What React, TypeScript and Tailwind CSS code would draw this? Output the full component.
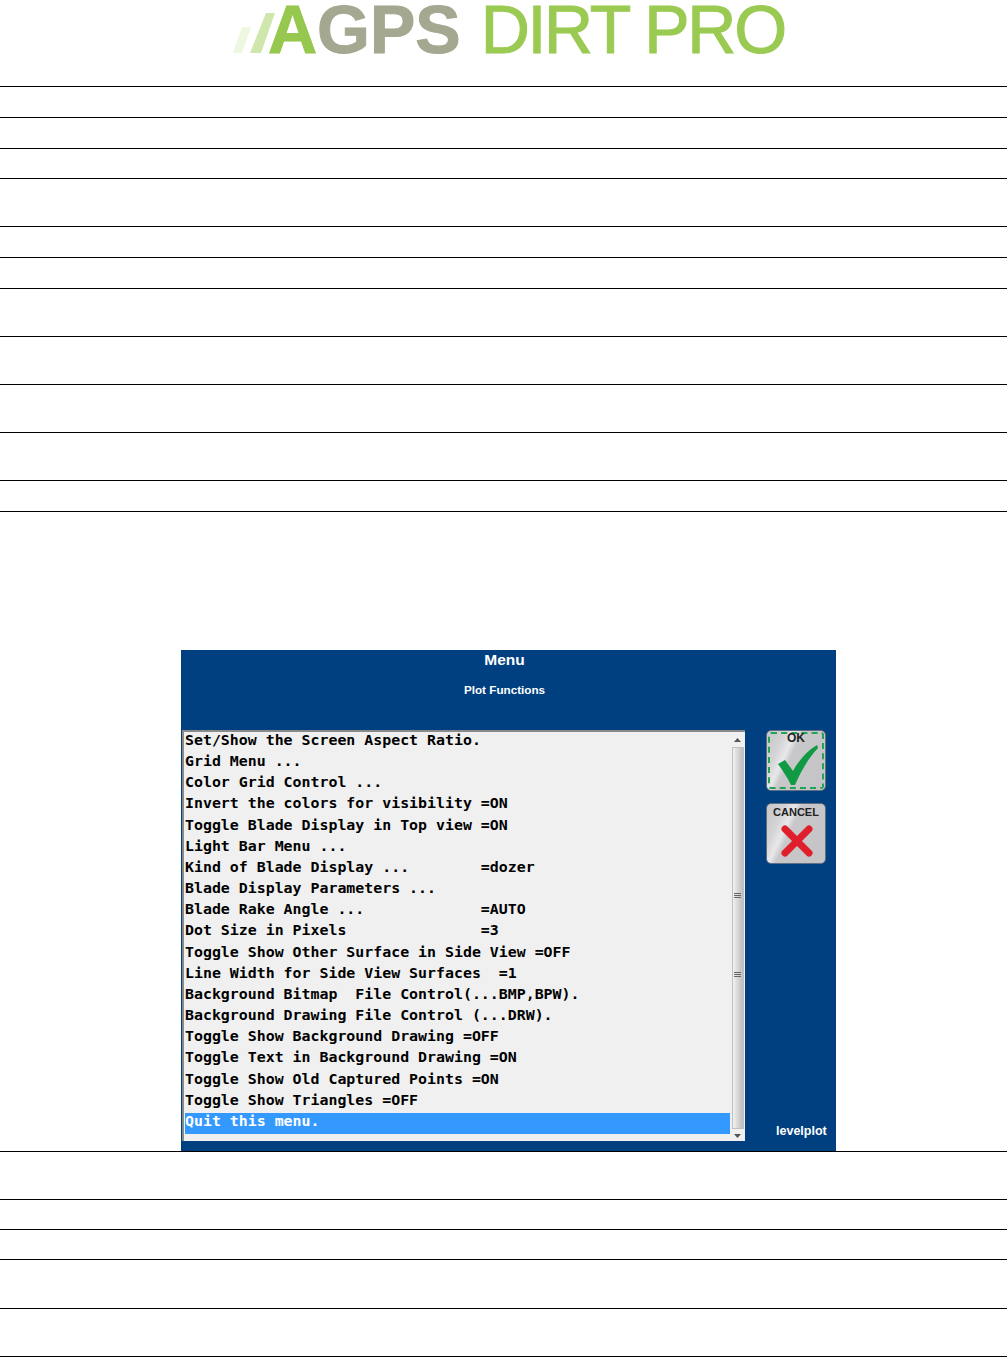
const topRows = [31, 31, 30, 48, 31, 31, 48, 48, 48, 48, 31];
const bottomRows = [48, 30, 30, 49, 48];

const menuLines = [
  'Set/Show the Screen Aspect Ratio.',
  'Grid Menu ...',
  'Color Grid Control ...',
  'Invert the colors for visibility =ON',
  'Toggle Blade Display in Top view =ON',
  'Light Bar Menu ...',
  'Kind of Blade Display ...        =dozer',
  'Blade Display Parameters ...',
  'Blade Rake Angle ...             =AUTO',
  'Dot Size in Pixels               =3',
  'Toggle Show Other Surface in Side View =OFF',
  'Line Width for Side View Surfaces  =1',
  'Background Bitmap  File Control(...BMP,BPW).',
  'Background Drawing File Control (...DRW).',
  'Toggle Show Background Drawing =OFF',
  'Toggle Text in Background Drawing =ON',
  'Toggle Show Old Captured Points =ON',
  'Toggle Show Triangles =OFF',
];

// empty table rows, the row height includes the 1px rule
const Row = ({ height }: { height: number }) => (
  <div className="border-b border-black" style={{ height }} />
);

const Logo = () => (
  <div className="h-[87px] border-b border-black flex items-start pl-[233px] font-['Liberation_Sans',sans-serif]">
    <svg width="42" height="52" viewBox="0 0 42 52" className="mt-[3px] -mr-[7px] shrink-0">
      <polygon points="0,50 9,50 18,24 9,24" fill="#eef7e0" />
      <polygon points="17,50 28,50 42,10 33,10" fill="#cfe6ac" />
    </svg>
    <span className="text-[68px] leading-[58px] font-bold text-[#a4a890] whitespace-pre [-webkit-text-stroke:1px_#a4a890]">
      <span className="text-[#96c74e] [-webkit-text-stroke:1px_#96c74e]">A</span>GPS
    </span>
    <span className="ml-[20px] text-[68px] leading-[58px] tracking-[-2.3px] text-[#9aca52] whitespace-pre [-webkit-text-stroke:1px_#9aca52]">DIRT PRO</span>
  </div>
);

const buttonFace =
  'relative w-[60px] h-[61px] rounded-[5px] border border-[#5f6f86] bg-[linear-gradient(115deg,#c6c6c8_0%,#d4d4d6_22%,#e8e8ea_34%,#c8c8ca_42%,#c4c4c6_100%)]';

const OkButton = () => (
  <div className={buttonFace}>
    <div className="absolute inset-[1px] border-2 border-dashed border-[#22a356] rounded-[3px]" />
    <div className="absolute top-0 inset-x-0 text-center text-[12px] leading-[15px] font-bold text-[#222]">OK</div>
    <svg width="44" height="44" viewBox="0 0 44 44" className="absolute left-[8px] top-[12px]">
      <path d="M3 21 L10 17 L18 28 C24 17 32 8 42 2 L43 5 C33 16 26 28 20 42 L16 42 C12 34 8 28 3 21 Z" fill="#119a44" />
    </svg>
  </div>
);

const CancelButton = () => (
  <div className={buttonFace}>
    <div className="absolute top-0 inset-x-0 text-center text-[11px] leading-[15px] pt-[1px] font-bold text-[#222]">CANCEL</div>
    <svg width="32" height="32" viewBox="0 0 32 32" className="absolute left-[14px] top-[21px]">
      <path d="M4 4 L28 28 M28 4 L4 28" stroke="#e01f2d" strokeWidth="7" strokeLinecap="round" />
    </svg>
  </div>
);

const Grip = () => (
  <div className="flex flex-col gap-[1px] items-center">
    <div className="w-[7px] h-[1px] bg-[#666]" />
    <div className="w-[7px] h-[1px] bg-[#666]" />
    <div className="w-[7px] h-[1px] bg-[#666]" />
  </div>
);

const Scrollbar = () => (
  <div className="w-[15px] shrink-0 flex flex-col items-center bg-[#f0f0f0]">
    <svg width="7" height="5" viewBox="0 0 7 5" className="mt-[6px] shrink-0">
      <polygon points="3.5,0 7,4 0,4" fill="#555" />
    </svg>
    <div className="mt-[4px] w-[12px] h-[382px] bg-gradient-to-r from-[#f2f2f2] via-[#d6d6da] to-[#bdbdc0] border border-[#c0c0c0] flex flex-col items-center pt-[145px] gap-[74px]">
      <Grip />
      <Grip />
    </div>
    <svg width="7" height="5" viewBox="0 0 7 5" className="mt-[5px] shrink-0">
      <polygon points="0,0 7,0 3.5,4" fill="#555" />
    </svg>
  </div>
);

const MenuPanel = () => (
  <div className="w-[655px] h-[501px] mt-[138px] ml-[181px] bg-[#004080] flex flex-col font-['Liberation_Sans',sans-serif] text-white font-bold">
    <div className="h-[80px] pr-[8px] flex flex-col items-center">
      <div className="text-[15.5px] leading-[20px]">Menu</div>
      <div className="text-[11.7px] leading-[14px] mt-[13px]">Plot Functions</div>
    </div>
    <div className="flex items-start">
      <div className="ml-[1px] w-[563px] h-[411px] flex bg-[#f0f0f0] border-t-2 border-l-2 border-[#8a8a8a]">
        <div className="flex-1 pl-[1px] font-['DejaVu_Sans_Mono',monospace] text-[14.9px] leading-[17px] text-black whitespace-pre">
          {menuLines.map((line) => (
            <div key={line} className="h-[21.17px]">{line}</div>
          ))}
          <div className="h-[21.17px] bg-[#3399ff] text-white">Quit this menu.</div>
        </div>
        <Scrollbar />
      </div>
      <div className="ml-[21px] w-[69px] h-[411px] flex flex-col">
        <OkButton />
        <div className="mt-[12px]">
          <CancelButton />
        </div>
        <div className="mt-auto mb-[3px] ml-[10px] text-[12.5px] leading-[14px] whitespace-pre">levelplot</div>
      </div>
    </div>
  </div>
);

export default function App() {
  return (
    <div className="w-[1007px] h-[1357px] bg-white overflow-hidden">
      <Logo />
      {topRows.map((h, i) => (
        <Row key={i} height={h} />
      ))}
      <MenuPanel />
      <div className="h-[1px] bg-black" />
      {bottomRows.map((h, i) => (
        <Row key={i} height={h} />
      ))}
    </div>
  );
}
